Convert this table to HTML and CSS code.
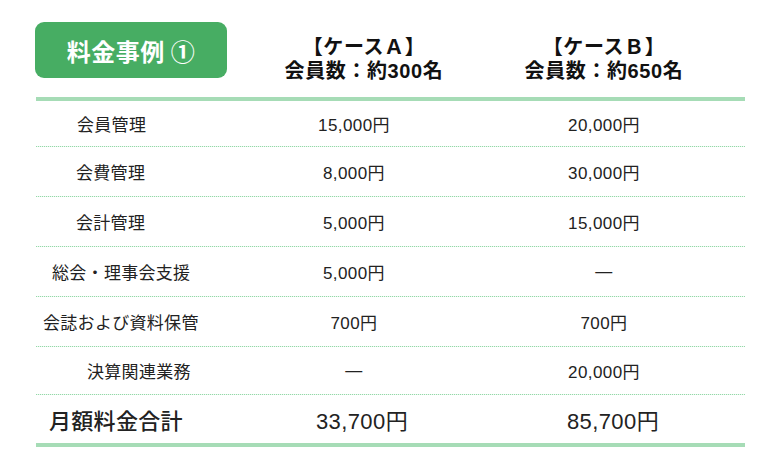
FILE: index.html
```html
<!DOCTYPE html>
<html lang="ja">
<head>
<meta charset="utf-8">
<link rel="stylesheet" href="styles.css">
</head>
<body>
<div class="page">
  <div class="head">
    <div class="head-cell head-cell--label"><div class="badge">料金事例 ①</div></div>
    <div class="head-cell head-cell--a"><div class="head-line">【ケースＡ】</div><div class="head-line">会員数：約300名</div></div>
    <div class="head-cell head-cell--b"><div class="head-line">【ケースＢ】</div><div class="head-line">会員数：約650名</div></div>
  </div>
  <div class="row row--first">
    <div class="label label--kanri">会員管理</div>
    <div class="val val--a">15,000円</div>
    <div class="val val--b">20,000円</div>
  </div>
  <div class="row">
    <div class="label label--kanri2">会費管理</div>
    <div class="val val--a">8,000円</div>
    <div class="val val--b">30,000円</div>
  </div>
  <div class="row">
    <div class="label label--kanri2">会計管理</div>
    <div class="val val--a">5,000円</div>
    <div class="val val--b">15,000円</div>
  </div>
  <div class="row">
    <div class="label label--soukai">総会・理事会支援</div>
    <div class="val val--a">5,000円</div>
    <div class="val val--b">—</div>
  </div>
  <div class="row">
    <div class="label label--kaishi">会誌および資料保管</div>
    <div class="val val--a">700円</div>
    <div class="val val--b">700円</div>
  </div>
  <div class="row row--last">
    <div class="label label--kessan">決算関連業務</div>
    <div class="val val--a">—</div>
    <div class="val val--b">20,000円</div>
  </div>
  <div class="row row--total">
    <div class="label label--total">月額料金合計</div>
    <div class="val val--a val--ta">33,700円</div>
    <div class="val val--b val--tb">85,700円</div>
  </div>
</div>
</body>
</html>
```

FILE: styles.css
```css
* { box-sizing: border-box; }
html, body { margin: 0; padding: 0; background: #fff; }
body {
  font-family: "Noto Sans CJK JP", "Noto Sans", sans-serif;
  color: #222;
}
.page {
  width: 767px;
  padding: 0 22px 0 36px;
}
.head, .row {
  display: grid;
  grid-template-columns: 200px 236px 1fr;
  align-items: center;
}
.head {
  height: 101px;
  border-bottom: 4px solid #a6dcb6;
  align-items: start;
}
.head-cell--label { padding-top: 22px; margin-left: -1px; }
.badge {
  width: 192px;
  height: 56px;
  border-radius: 9px;
  background: #47ad63;
  color: #fff;
  font-size: 24px;
  font-weight: 700;
  display: flex;
  align-items: center;
  justify-content: center;
  letter-spacing: 0.5px;
}
.head-cell--a, .head-cell--b {
  padding-top: 35px;
  text-align: center;
  font-family: "Liberation Sans", "Noto Sans CJK JP", sans-serif;
  font-size: 20px;
  font-weight: 700;
  color: #111;
  letter-spacing: 0.6px;
}
.head-line {
  line-height: 24px;
  height: 24px;
}
.head-cell--a { padding-left: 20px; }
.head-cell--b { padding-right: 9px; }
.row {
  height: 50px;
  background: repeating-linear-gradient(to right, #94d9a8 0 1px, #eaf7ee 1px 2px) left bottom / 100% 1px no-repeat;
  padding-bottom: 1px;
}
.row--first { height: 46px; }
.row--last { height: 48px; }
.row--total {
  height: 52px;
  background: none;
  border-bottom: 4px solid #a6dcb6;
}
.label {
  font-size: 17px;
  letter-spacing: 0.3px;
}
.label--kanri { padding-left: 41px; }
.label--kanri2 { padding-left: 40px; }
.label--soukai { padding-left: 16px; }
.label--kaishi { padding-left: 7px; }
.label--kessan { padding-left: 51px; }
.label--total { padding-left: 13px; font-size: 22px; font-weight: 500; letter-spacing: 0.3px; }
.val {
  text-align: center;
  font-family: "Liberation Sans", "Noto Sans CJK JP", sans-serif;
  font-size: 17px;
  letter-spacing: 0.4px;
}
.val--b { padding-right: 9px; }
.val--ta { padding-left: 16px; font-size: 22px; }
.val--tb { padding-left: 18px; font-size: 22px; }
```
